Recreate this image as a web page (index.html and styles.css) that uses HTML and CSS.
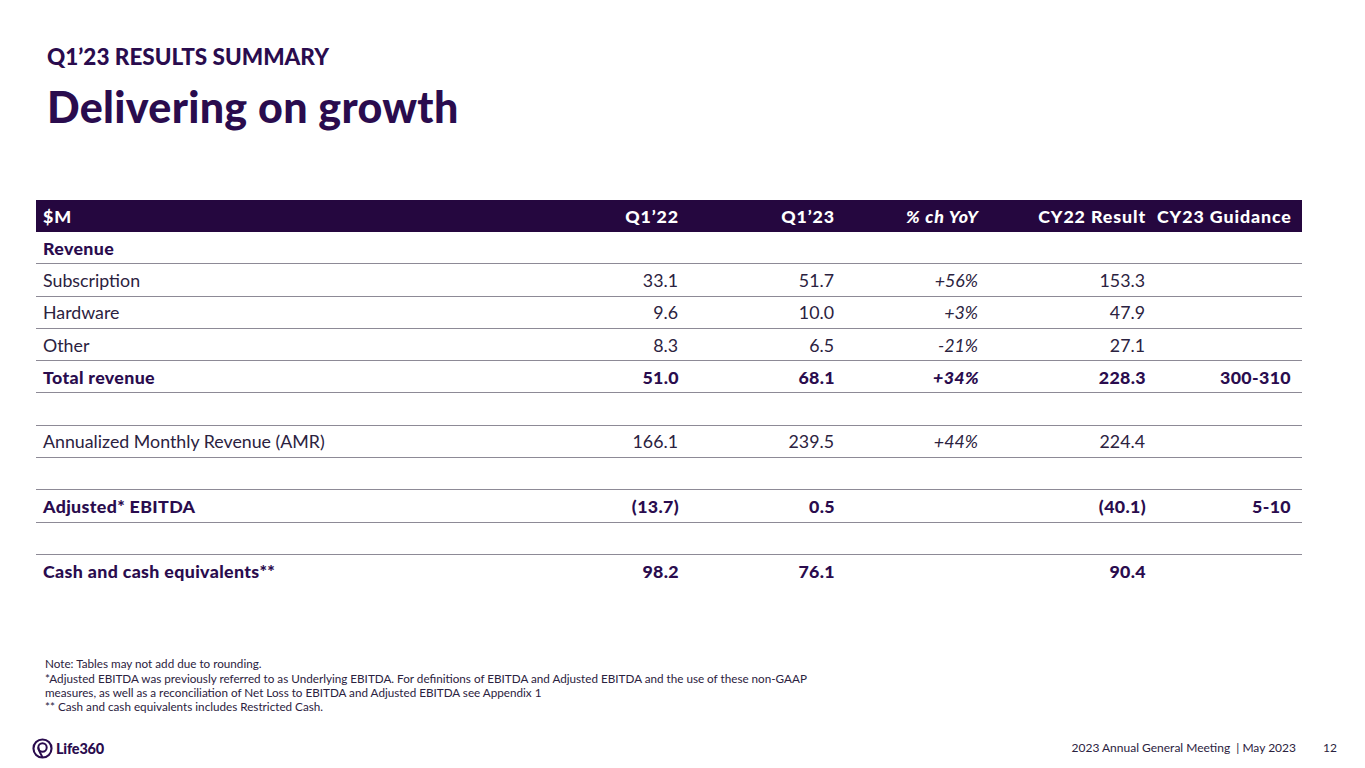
FILE: index.html
```html
<!DOCTYPE html>
<html>
<head>
<meta charset="utf-8">
<link rel="stylesheet" href="styles.css">
</head>
<body>
<div class="slide">
  <header class="head">
    <div class="kicker">Q1’23 RESULTS SUMMARY</div>
    <h1 class="title">Delivering on growth</h1>
  </header>

  <div class="table">
    <div class="row th">
      <div class="c lbl">$M</div>
      <div class="c">Q1’22</div>
      <div class="c">Q1’23</div>
      <div class="c it">% ch YoY</div>
      <div class="c">CY22 Result</div>
      <div class="c">CY23 Guidance</div>
    </div>
    <div class="row b line">
      <div class="c lbl">Revenue</div><div class="c"></div><div class="c"></div><div class="c"></div><div class="c"></div><div class="c"></div>
    </div>
    <div class="row line">
      <div class="c lbl">Subscription</div><div class="c">33.1</div><div class="c">51.7</div><div class="c it">+56%</div><div class="c">153.3</div><div class="c"></div>
    </div>
    <div class="row line">
      <div class="c lbl">Hardware</div><div class="c">9.6</div><div class="c">10.0</div><div class="c it">+3%</div><div class="c">47.9</div><div class="c"></div>
    </div>
    <div class="row line">
      <div class="c lbl">Other</div><div class="c">8.3</div><div class="c">6.5</div><div class="c it">-21%</div><div class="c">27.1</div><div class="c"></div>
    </div>
    <div class="row b line">
      <div class="c lbl">Total revenue</div><div class="c">51.0</div><div class="c">68.1</div><div class="c it">+34%</div><div class="c">228.3</div><div class="c">300-310</div>
    </div>
    <div class="row line blank"></div>
    <div class="row line">
      <div class="c lbl">Annualized Monthly Revenue (AMR)</div><div class="c">166.1</div><div class="c">239.5</div><div class="c it">+44%</div><div class="c">224.4</div><div class="c"></div>
    </div>
    <div class="row line blank"></div>
    <div class="row b line">
      <div class="c lbl">Adjusted* EBITDA</div><div class="c">(13.7)</div><div class="c">0.5</div><div class="c"></div><div class="c">(40.1)</div><div class="c">5-10</div>
    </div>
    <div class="row line blank"></div>
    <div class="row b">
      <div class="c lbl">Cash and cash equivalents**</div><div class="c">98.2</div><div class="c">76.1</div><div class="c"></div><div class="c">90.4</div><div class="c"></div>
    </div>
  </div>

  <div class="notes">
    <p>Note: Tables may not add due to rounding.</p>
    <p>*Adjusted EBITDA was previously referred to as Underlying EBITDA. For definitions of EBITDA and Adjusted EBITDA and the use of these non-GAAP<br>measures, as well as a reconciliation of Net Loss to EBITDA and Adjusted EBITDA see Appendix 1</p>
    <p>** Cash and cash equivalents includes Restricted Cash.</p>
  </div>

  <footer class="foot">
    <div class="logo">
      <svg width="21" height="21" viewBox="0 0 20 20" aria-hidden="true">
        <circle cx="10" cy="10" r="8.6" fill="none" stroke="#2a0c4e" stroke-width="2"/>
        <circle cx="10" cy="9" r="4" fill="none" stroke="#2a0c4e" stroke-width="1.9"/>
        <path d="M6 9 C6 12.5 8.5 14.5 10 18.6" fill="none" stroke="#2a0c4e" stroke-width="1.9"/>
      </svg>
      <span class="logotext">Life360</span>
    </div>
    <div class="meta">
      <span>2023 Annual General Meeting &nbsp;| May 2023</span>
      <span class="pg">12</span>
    </div>
  </footer>
</div>
</body>
</html>
```

FILE: styles.css
```css
html, body {
  margin: 0;
  padding: 0;
  background: #ffffff;
}
body {
  font-family: Lato, "Noto Sans", "Liberation Sans", sans-serif;
  color: #2a1840;
}
.slide {
  width: 1365px;
  height: 768px;
  position: relative;
  overflow: hidden;
  display: flex;
  flex-direction: column;
}
.head {
  padding: 43px 0 0 47px;
  color: #2a0c4e;
}
.kicker {
  font-size: 22.5px;
  font-weight: 900;
  line-height: 27px;
  letter-spacing: 0;
}
.title {
  margin: 13px 0 0 0;
  font-size: 43px;
  font-weight: 900;
  line-height: 48px;
  letter-spacing: 0.3px;
}
.table {
  margin: 69px 0 0 36px;
  width: 1266px;
}
.row {
  display: grid;
  grid-template-columns: 498px 156px 156px 144px 167px 145px;
  height: 32.3px;
  align-items: center;
  font-size: 17.8px;
  color: #2b2240;
  box-sizing: border-box;
}
.row.line {
  border-bottom: 1px solid #8d8a96;
}
.row.th {
  background: #25073f;
  color: #ffffff;
  font-weight: 900;
  height: 32px;
  letter-spacing: 0.9px;
}
.row.b {
  font-weight: 900;
  color: #2a0c4e;
  letter-spacing: 0.35px;
}
.c {
  text-align: right;
  padding-right: 12px;
  white-space: nowrap;
}
.row.th .c, .row.b .c {
  padding-right: 11px;
}
.c.lbl {
  text-align: left;
  padding-left: 7px;
  padding-right: 0;
}
.row.th .c.lbl, .row.b .c.lbl {
  padding-right: 0;
}
.c.it {
  font-style: italic;
}
.notes {
  margin: 69px 0 0 45px;
  font-size: 11.7px;
  line-height: 14.3px;
  color: #2b2240;
}
.notes p {
  margin: 0;
}
.foot {
  margin-top: auto;
  height: 30px;
  display: flex;
  justify-content: space-between;
  align-items: flex-start;
  padding: 0 32px 0 32px;
}
.logo {
  display: flex;
  align-items: center;
  gap: 3px;
}
.logotext {
  font-size: 14.5px;
  font-weight: 900;
  color: #2a0c4e;
  letter-spacing: -0.2px;
}
.meta {
  display: flex;
  gap: 27px;
  font-size: 12px;
  color: #2b2240;
  padding-top: 2px;
}
.pg {
  width: 10px;
}
```
